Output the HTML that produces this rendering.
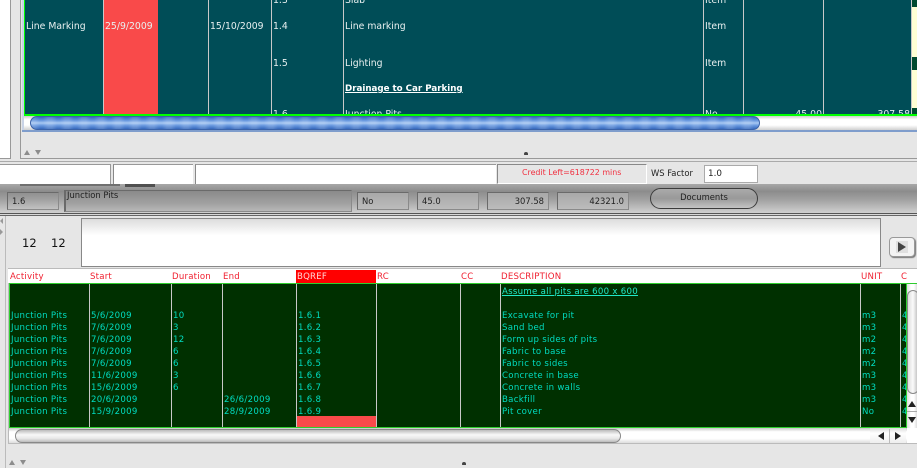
<!DOCTYPE html>
<html><head><meta charset="utf-8"><style>
html,body{margin:0;padding:0}
body{width:917px;height:468px;overflow:hidden;position:relative;background:#e6e6e6;font-family:"DejaVu Sans","Liberation Sans",sans-serif}
div,span{position:absolute;box-sizing:border-box}
.t{white-space:nowrap;line-height:12px;height:12px}
.u{font-size:9.3px;color:#e8f0f0;font-family:"DejaVu Sans",sans-serif}
.l{font-size:8.6px;color:#00dcc0;letter-spacing:.28px}
.h{font-size:8.6px;color:#f02030;top:271px;letter-spacing:.2px}
.v{background:#c8c8c8;width:1px}
.box{border:1px solid #6a6a6a;font-size:8.4px;color:#222;line-height:16px;padding:0 4px;border-right-color:#8a8a8a;border-bottom-color:#8a8a8a}
</style></head><body>
<!-- top -->
<div style="left:0;top:0;width:11px;height:159px;background:#fff;border-right:1px solid #999;border-bottom:1px solid #999"></div>
<div style="left:20px;top:0;width:897px;height:159px;border-left:1px solid #999;border-bottom:1px solid #999"></div>
<div style="left:22px;top:0;width:2px;height:131px;background:#c9d3e6"></div>
<div style="left:24px;top:0;width:893px;height:116px;background:#004d57;border-left:1px solid #0f0;border-bottom:2px solid #0f0"></div>
<div style="left:104px;top:0;width:54px;height:114px;background:#f94a4a"></div>
<div class="v" style="left:103px;top:0;height:114px"></div>
<div class="v" style="left:208px;top:0;height:114px"></div>
<div class="v" style="left:271px;top:0;height:114px"></div>
<div class="v" style="left:343px;top:0;height:114px"></div>
<div class="v" style="left:703px;top:0;height:114px"></div>
<div class="v" style="left:743px;top:0;height:114px"></div>
<div class="v" style="left:823px;top:0;height:114px"></div>
<div class="v" style="left:911px;top:0;height:114px"></div>
<div style="left:912px;top:0;width:5px;height:114px;background:#ffffd4"></div>
<div style="left:912px;top:0;width:5px;height:7px;background:#004a30"></div>
<div style="left:912px;top:57px;width:5px;height:13px;background:#004a30"></div>
<div style="left:912px;top:108px;width:5px;height:6px;background:#004a30"></div>
<div style="left:0;top:0;width:917px;height:114px;overflow:hidden">
<span class="t u" style="left:273px;top:-5px">1.3</span>
<span class="t u" style="left:345px;top:-5px">Slab</span>
<span class="t u" style="left:705px;top:-5px">Item</span>
<span class="t u" style="left:26px;top:21px">Line Marking</span>
<span class="t u" style="left:105px;top:21px">25/9/2009</span>
<span class="t u" style="left:210px;top:21px">15/10/2009</span>
<span class="t u" style="left:273px;top:21px">1.4</span>
<span class="t u" style="left:345px;top:21px">Line marking</span>
<span class="t u" style="left:705px;top:21px">Item</span>
<span class="t u" style="left:273px;top:58px">1.5</span>
<span class="t u" style="left:345px;top:58px">Lighting</span>
<span class="t u" style="left:705px;top:58px">Item</span>
<span class="t u" style="left:345px;top:83px;font-weight:bold;font-size:8.7px;color:#fff;text-decoration:underline">Drainage to Car Parking</span>
<span class="t u" style="left:273px;top:109px">1.6</span>
<span class="t u" style="left:345px;top:109px">Junction Pits</span>
<span class="t u" style="left:705px;top:109px">No</span>
<span class="t u" style="right:95px;top:109px">45.00</span>
<span class="t u" style="right:7px;top:109px">307.58</span>
</div>
<!-- top scrollbar -->
<div style="left:24px;top:116px;width:893px;height:14px;background:linear-gradient(#ccc,#fff 25%,#fff 65%,#d0d0d0)"></div>
<div style="left:22px;top:130px;width:895px;height:2px;background:#7f9dcc"></div>
<div style="left:30px;top:116px;width:730px;height:14px;border-radius:7px;border:1px solid #3a62a8;background:repeating-linear-gradient(90deg,rgba(255,255,255,.14) 0 4px,rgba(255,255,255,0) 9px 12px,rgba(255,255,255,.14) 17px),linear-gradient(#3668bc,#6a9ae0 30%,#a8c8f2 50%,#6a9ae0 70%,#3668bc)"></div>
<div style="left:24px;top:150px;width:0;height:0;border-left:3.5px solid transparent;border-right:3.5px solid transparent;border-bottom:5px solid #8c8c8c"></div>
<div style="left:35px;top:150px;width:0;height:0;border-left:3.5px solid transparent;border-right:3.5px solid transparent;border-top:5px solid #8c8c8c"></div>
<div style="left:524px;top:152px;width:4px;height:3px;border-radius:3px 3px 0 1px;background:#444"></div>
<!-- mid bar -->
<div style="left:0;top:161px;width:917px;height:1px;background:#aaa"></div>
<div style="left:-4px;top:164px;width:115px;height:20px;background:#fff;border:1px solid #999;border-width:1px 1px 0 0"></div>
<div style="left:113px;top:164px;width:80px;height:20px;background:#fff;border-left:1px solid #888;border-top:1px solid #999"></div>
<div style="left:195px;top:164px;width:301px;height:20px;background:#fff;border-left:1px solid #888;border-top:1px solid #999"></div>
<div style="left:497px;top:164px;width:150px;height:20px;background:#e6e6e6;border:1px solid #888;border-right:1px solid #fff;border-bottom:1px solid #fff"></div>
<div class="t" style="left:522px;top:167px;font-size:7.9px;color:#f03040;font-family:'DejaVu Sans',sans-serif">Credit Left=618722 mins</div>
<div class="t" style="left:651px;top:167px;font-size:8.4px;color:#222">WS Factor</div>
<div style="left:704px;top:165px;width:54px;height:18px;background:#fff;border:1px solid #aaa;font-size:8.8px;line-height:16px;padding-left:3px;color:#222">1.0</div>
<!-- gray bar -->
<div style="left:0;top:184px;width:917px;height:29px;background:linear-gradient(#a8a8a8,#8c8c8c 25%,#a2a2a2 55%,#d0d0d0 100%)"></div>
<div style="left:0;top:213px;width:917px;height:1px;background:#555"></div>
<div style="left:0;top:214px;width:917px;height:1px;background:#d8d8d8"></div>
<div style="left:0;top:215px;width:917px;height:1px;background:#666"></div>
<div style="left:20px;top:184px;width:100px;height:2px;background:#707070"></div>
<div style="left:125px;top:184px;width:30px;height:3px;background:#505050"></div>
<div class="box" style="left:7px;top:192px;width:52px;height:18px">1.6</div>
<div class="box" style="left:64px;top:190px;width:288px;height:22px;line-height:8px;padding:0 1px;border-left-width:2px;background:linear-gradient(#8a8a8a,#a0a0a0 60%,#b8b8b8)">Junction Pits</div>
<div class="box" style="left:357px;top:192px;width:52px;height:18px;background:linear-gradient(#a8a8a8,#bcbcbc)">No</div>
<div class="box" style="left:417px;top:192px;width:62px;height:18px;background:linear-gradient(#a8a8a8,#bcbcbc)">45.0</div>
<div class="box" style="left:487px;top:192px;width:62px;height:18px;text-align:right;background:linear-gradient(#a8a8a8,#bcbcbc)">307.58</div>
<div class="box" style="left:557px;top:192px;width:72px;height:18px;text-align:right;background:linear-gradient(#a8a8a8,#bcbcbc)">42321.0</div>
<div style="left:650px;top:188px;width:108px;height:21px;border:1px solid #3c3c3c;border-radius:11px;text-align:center;font-size:8.4px;color:#222;line-height:16px;background:linear-gradient(#aaa,#999 50%,#c4c4c4)">Documents</div>
<!-- lower panel -->
<div style="left:5px;top:216px;width:1px;height:252px;background:#bbb"></div>
<div style="left:0;top:218px;width:0;height:0;border-top:3px solid transparent;border-bottom:3px solid transparent;border-right:3px solid #999"></div>
<div style="left:0;top:229px;width:0;height:0;border-top:3px solid transparent;border-bottom:3px solid transparent;border-left:3px solid #999"></div>
<div class="t" style="left:22px;top:236px;font-size:11.5px;line-height:14px;height:14px;color:#111">12</div>
<div class="t" style="left:51px;top:236px;font-size:11.5px;line-height:14px;height:14px;color:#111">12</div>
<div style="left:81px;top:218px;width:800px;height:49px;border:1px solid #888;background:linear-gradient(#ddd,#fff 35%)"></div>
<div style="left:889px;top:237px;width:26px;height:20px;background:#f4f4f4;border:1px solid #999;border-radius:4px;box-shadow:1px 1px 1px #777"></div>
<div style="left:896px;top:241px;width:12px;height:12px;background:#e0e0e0"></div>
<div style="left:898px;top:242px;width:0;height:0;border-top:5px solid transparent;border-bottom:5px solid transparent;border-left:8px solid #444"></div>
<!-- header -->
<div style="left:8px;top:268px;width:909px;height:16px;background:#fff;border-top:1px solid #bbb"></div>
<div style="left:296px;top:270px;width:80px;height:13px;background:#f00"></div>
<span class="t h" style="left:10px">Activity</span>
<span class="t h" style="left:90px">Start</span>
<span class="t h" style="left:172px">Duration</span>
<span class="t h" style="left:223px">End</span>
<span class="t h" style="left:297px;color:#ffd8d8">BQREF</span>
<span class="t h" style="left:377px">RC</span>
<span class="t h" style="left:461px">CC</span>
<span class="t h" style="left:501px">DESCRIPTION</span>
<span class="t h" style="left:861px">UNIT</span>
<span class="t h" style="left:901px">C</span>
<!-- lower table -->
<div style="left:8px;top:283px;width:1px;height:161px;background:#bbb"></div>
<div style="left:9px;top:283px;width:908px;height:1px;background:#2ecc2e"></div>
<div style="left:9px;top:283px;width:898px;height:145px;background:#003000;border:1px solid #2fd02f"></div>
<div style="left:297px;top:416px;width:80px;height:11px;background:#f94a4a"></div>
<div class="v" style="left:89px;top:284px;height:143px"></div>
<div class="v" style="left:171px;top:284px;height:143px"></div>
<div class="v" style="left:222px;top:284px;height:143px"></div>
<div class="v" style="left:296px;top:284px;height:143px"></div>
<div class="v" style="left:376px;top:284px;height:143px"></div>
<div class="v" style="left:460px;top:284px;height:143px"></div>
<div class="v" style="left:500px;top:284px;height:143px"></div>
<div class="v" style="left:860px;top:284px;height:143px"></div>
<div class="v" style="left:900px;top:284px;height:143px"></div>
<span class="t l" style="left:502px;top:286px;text-decoration:underline;color:#20e8c8">Assume all pits are 600 x 600</span>
<span class="t l" style="left:11px;top:310px">Junction Pits</span><span class="t l" style="left:91px;top:310px">5/6/2009</span><span class="t l" style="left:173px;top:310px">10</span><span class="t l" style="left:298px;top:310px">1.6.1</span><span class="t l" style="left:502px;top:310px">Excavate for pit</span><span class="t l" style="left:862px;top:310px">m3</span>
<span class="t l" style="left:11px;top:322px">Junction Pits</span><span class="t l" style="left:91px;top:322px">7/6/2009</span><span class="t l" style="left:173px;top:322px">3</span><span class="t l" style="left:298px;top:322px">1.6.2</span><span class="t l" style="left:502px;top:322px">Sand bed</span><span class="t l" style="left:862px;top:322px">m3</span>
<span class="t l" style="left:11px;top:334px">Junction Pits</span><span class="t l" style="left:91px;top:334px">7/6/2009</span><span class="t l" style="left:173px;top:334px">12</span><span class="t l" style="left:298px;top:334px">1.6.3</span><span class="t l" style="left:502px;top:334px">Form up sides of pits</span><span class="t l" style="left:862px;top:334px">m2</span>
<span class="t l" style="left:11px;top:346px">Junction Pits</span><span class="t l" style="left:91px;top:346px">7/6/2009</span><span class="t l" style="left:173px;top:346px">6</span><span class="t l" style="left:298px;top:346px">1.6.4</span><span class="t l" style="left:502px;top:346px">Fabric to base</span><span class="t l" style="left:862px;top:346px">m2</span>
<span class="t l" style="left:11px;top:358px">Junction Pits</span><span class="t l" style="left:91px;top:358px">7/6/2009</span><span class="t l" style="left:173px;top:358px">6</span><span class="t l" style="left:298px;top:358px">1.6.5</span><span class="t l" style="left:502px;top:358px">Fabric to sides</span><span class="t l" style="left:862px;top:358px">m2</span>
<span class="t l" style="left:11px;top:370px">Junction Pits</span><span class="t l" style="left:91px;top:370px">11/6/2009</span><span class="t l" style="left:173px;top:370px">3</span><span class="t l" style="left:298px;top:370px">1.6.6</span><span class="t l" style="left:502px;top:370px">Concrete in base</span><span class="t l" style="left:862px;top:370px">m3</span>
<span class="t l" style="left:11px;top:382px">Junction Pits</span><span class="t l" style="left:91px;top:382px">15/6/2009</span><span class="t l" style="left:173px;top:382px">6</span><span class="t l" style="left:298px;top:382px">1.6.7</span><span class="t l" style="left:502px;top:382px">Concrete in walls</span><span class="t l" style="left:862px;top:382px">m3</span>
<span class="t l" style="left:11px;top:394px">Junction Pits</span><span class="t l" style="left:91px;top:394px">20/6/2009</span><span class="t l" style="left:224px;top:394px">26/6/2009</span><span class="t l" style="left:298px;top:394px">1.6.8</span><span class="t l" style="left:502px;top:394px">Backfill</span><span class="t l" style="left:862px;top:394px">m3</span>
<span class="t l" style="left:11px;top:406px">Junction Pits</span><span class="t l" style="left:91px;top:406px">15/9/2009</span><span class="t l" style="left:224px;top:406px">28/9/2009</span><span class="t l" style="left:298px;top:406px">1.6.9</span><span class="t l" style="left:502px;top:406px">Pit cover</span><span class="t l" style="left:862px;top:406px">No</span>
<div style="left:902px;top:310px;width:4px;height:108px;overflow:hidden;color:#00dcc0;font-size:8.6px;line-height:12px">4<br>4<br>4<br>4<br>4<br>4<br>4<br>4<br>4</div>
<!-- vertical scrollbar -->
<div style="left:907px;top:284px;width:10px;height:144px;background:linear-gradient(90deg,#ddd,#fff 40%,#fff 70%,#ddd)"></div>
<div style="left:907px;top:290px;width:12px;height:104px;border:1px solid #888;border-radius:6px;background:linear-gradient(90deg,#ddd,#fbfbfb 50%,#bbb)"></div>
<div style="left:907px;top:411px;width:10px;height:1px;background:#aaa"></div>
<div style="left:908px;top:401px;width:0;height:0;border-left:4px solid transparent;border-right:4px solid transparent;border-bottom:6px solid #222"></div>
<div style="left:908px;top:417px;width:0;height:0;border-left:4px solid transparent;border-right:4px solid transparent;border-top:6px solid #222"></div>
<!-- horizontal scrollbar -->
<div style="left:9px;top:428px;width:898px;height:15px;background:linear-gradient(#c8c8c8,#fff 25%,#fff 70%,#ddd)"></div>
<div style="left:15px;top:429px;width:606px;height:14px;border:1px solid #888;border-radius:7px;background:linear-gradient(#bbb,#f8f8f8 40%,#e8e8e8 70%,#bbb)"></div>
<div style="left:870px;top:428px;width:36px;height:15px;background:linear-gradient(#ddd,#fff 35%,#eee)"></div>
<div style="left:889px;top:429px;width:1px;height:14px;background:#bbb"></div>
<div style="left:878px;top:432px;width:0;height:0;border-top:4px solid transparent;border-bottom:4px solid transparent;border-right:6px solid #222"></div>
<div style="left:895px;top:432px;width:0;height:0;border-top:4px solid transparent;border-bottom:4px solid transparent;border-left:6px solid #222"></div>
<div style="left:907px;top:428px;width:10px;height:15px;background:#fff"></div>
<div style="left:8px;top:443px;width:909px;height:1px;background:#bbb"></div>
<div style="left:9px;top:460px;width:0;height:0;border-left:3.5px solid transparent;border-right:3.5px solid transparent;border-bottom:5px solid #8c8c8c"></div>
<div style="left:20px;top:460px;width:0;height:0;border-left:3.5px solid transparent;border-right:3.5px solid transparent;border-top:5px solid #8c8c8c"></div>
<div style="left:462px;top:462px;width:4px;height:3px;border-radius:3px 3px 0 1px;background:#444"></div>
</body></html>
